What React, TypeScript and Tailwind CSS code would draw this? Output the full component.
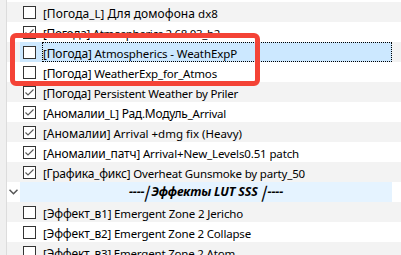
import React, { useLayoutEffect, useRef, useState } from "react";

type Row =
  | { kind: "item"; text: string; checked: boolean; end: number; selected?: boolean }
  | { kind: "header" };

const rows: Row[] = [
  { kind: "item", text: "[Погода_L] Для домофона dx8", checked: false, end: 218 },
  { kind: "item", text: "[Погода] Atmospherics 2.68.03_b2", checked: true, end: 220 },
  { kind: "item", text: "[Погода] Atmospherics - WeathExpP", checked: false, selected: true, end: 237 },
  { kind: "item", text: "[Погода] WeatherExp_for_Atmos", checked: false, end: 217 },
  { kind: "item", text: "[Погода] Persistent Weather by Priler", checked: true, end: 238 },
  { kind: "item", text: "[Аномалии_L] Рад.Модуль_Arrival", checked: true, end: 226 },
  { kind: "item", text: "[Аномалии] Arrival +dmg fix (Heavy)", checked: true, end: 242 },
  { kind: "item", text: "[Аномалии_патч] Arrival+New_Levels0.51 patch", checked: true, end: 299 },
  { kind: "item", text: "[Графика_фикс] Overheat Gunsmoke by party_50", checked: true, end: 305 },
  { kind: "header" },
  { kind: "item", text: "[Эффект_в1] Emergent Zone 2 Jericho", checked: false, end: 243 },
  { kind: "item", text: "[Эффект_в2] Emergent Zone 2 Collapse", checked: false, end: 251 },
  { kind: "item", text: "[Эффект_в3] Emergent Zone 2 Atom", checked: false, end: 235 },
];

const TEXT_START = 43;

function Runs({ text }: { text: string }) {
  const parts = text.split(/([\u0400-\u04FF]+)/).filter((p) => p.length > 0);
  return (
    <>
      {parts.map((p, i) =>
        /[\u0400-\u04FF]/.test(p) ? (
          <span key={i} className="text-[12px]">
            {p}
          </span>
        ) : (
          <span key={i} className="text-[11.5px]">
            {p}
          </span>
        )
      )}
    </>
  );
}

function Fit({
  chars,
  width,
  className,
  children,
}: {
  chars: number;
  width: number;
  className?: string;
  children: React.ReactNode;
}) {
  const ref = useRef<HTMLSpanElement>(null);
  const [ls, setLs] = useState(0);
  useLayoutEffect(() => {
    const el = ref.current;
    if (!el) return;
    const w = el.getBoundingClientRect().width;
    setLs((width - w) / chars);
  }, [chars, width]);
  return (
    <span ref={ref} style={{ letterSpacing: `${ls}px` }} className={`whitespace-pre ${className ?? ""}`}>
      {children}
    </span>
  );
}

function Box({ checked }: { checked: boolean }) {
  return (
    <div className="w-[13px] h-[13px] border border-[#333333] bg-white shrink-0 flex items-center justify-center">
      {checked && (
        <svg width="11" height="11" viewBox="0 0 11 11">
          <polyline points="1.5,5.5 4,8 9.5,2.5" fill="none" stroke="#555555" strokeWidth="1.1" />
        </svg>
      )}
    </div>
  );
}

function Bar() {
  return <span className="inline-block -skew-x-[20deg] translate-y-[1px] scale-y-[1.3]">|</span>;
}

const HEADER_LEFT = "----";
const HEADER_MID = "Эффекты LUT SSS ";
const HEADER_RIGHT = "----";

export default function App() {
  return (
    <div
      className="relative w-[401px] h-[255px] overflow-hidden bg-white flex"
      style={{ fontFamily: '"Noto Sans", "Segoe UI", sans-serif' }}
    >
      <div className="w-[7px] h-full bg-[#f0f0f0] border-r border-[#dcdcdc] shrink-0" />
      <div className="flex-1 flex flex-col pt-[2px]">
        {rows.map((r, i) => {
          const stripe = i % 2 === 0 ? "bg-[#f3f3f3]" : "bg-white";
          if (r.kind === "header") {
            return (
              <div key={i} className={`h-[20px] shrink-0 flex ${stripe}`}>
                <div className="w-[13px] flex items-center justify-center">
                  <svg width="9" height="6" viewBox="0 0 9 6">
                    <polyline points="0.5,0.8 4.5,4.8 8.5,0.8" fill="none" stroke="#555" strokeWidth="1.5" />
                  </svg>
                </div>
                <div className="w-[372px] bg-[#e5f3ff] flex items-center justify-center text-[12.5px] font-bold italic text-black leading-none">
                  <Fit
                    chars={HEADER_LEFT.length + HEADER_MID.length + HEADER_RIGHT.length + 2}
                    width={154}
                    className="inline-flex items-center"
                  >
                    <span>{HEADER_LEFT}</span>
                    <Bar />
                    <span>{HEADER_MID}</span>
                    <Bar />
                    <span>{HEADER_RIGHT}</span>
                  </Fit>
                </div>
              </div>
            );
          }
          return (
            <div key={i} className={`h-[20px] shrink-0 flex ${stripe}`}>
              <div className="w-[13px]" />
              <div
                className={`w-[372px] flex items-center pl-[3px] gap-[6px] ${r.selected ? "bg-[#cce8ff]" : ""}`}
              >
                <Box checked={r.checked} />
                <div
                  className={`flex-1 h-full flex items-center text-black whitespace-nowrap leading-none pl-[1px] ${
                    r.selected ? "outline outline-1 outline-dotted outline-black -outline-offset-1" : ""
                  }`}
                >
                  <Fit chars={Array.from(r.text).length} width={r.end - TEXT_START}>
                    <Runs text={r.text} />
                  </Fit>
                </div>
              </div>
            </div>
          );
        })}
      </div>
      <div className="absolute left-[10px] top-[33px] w-[250px] h-[53px] border-[5px] border-[#f44336] rounded-[6px] pointer-events-none" />
    </div>
  );
}
